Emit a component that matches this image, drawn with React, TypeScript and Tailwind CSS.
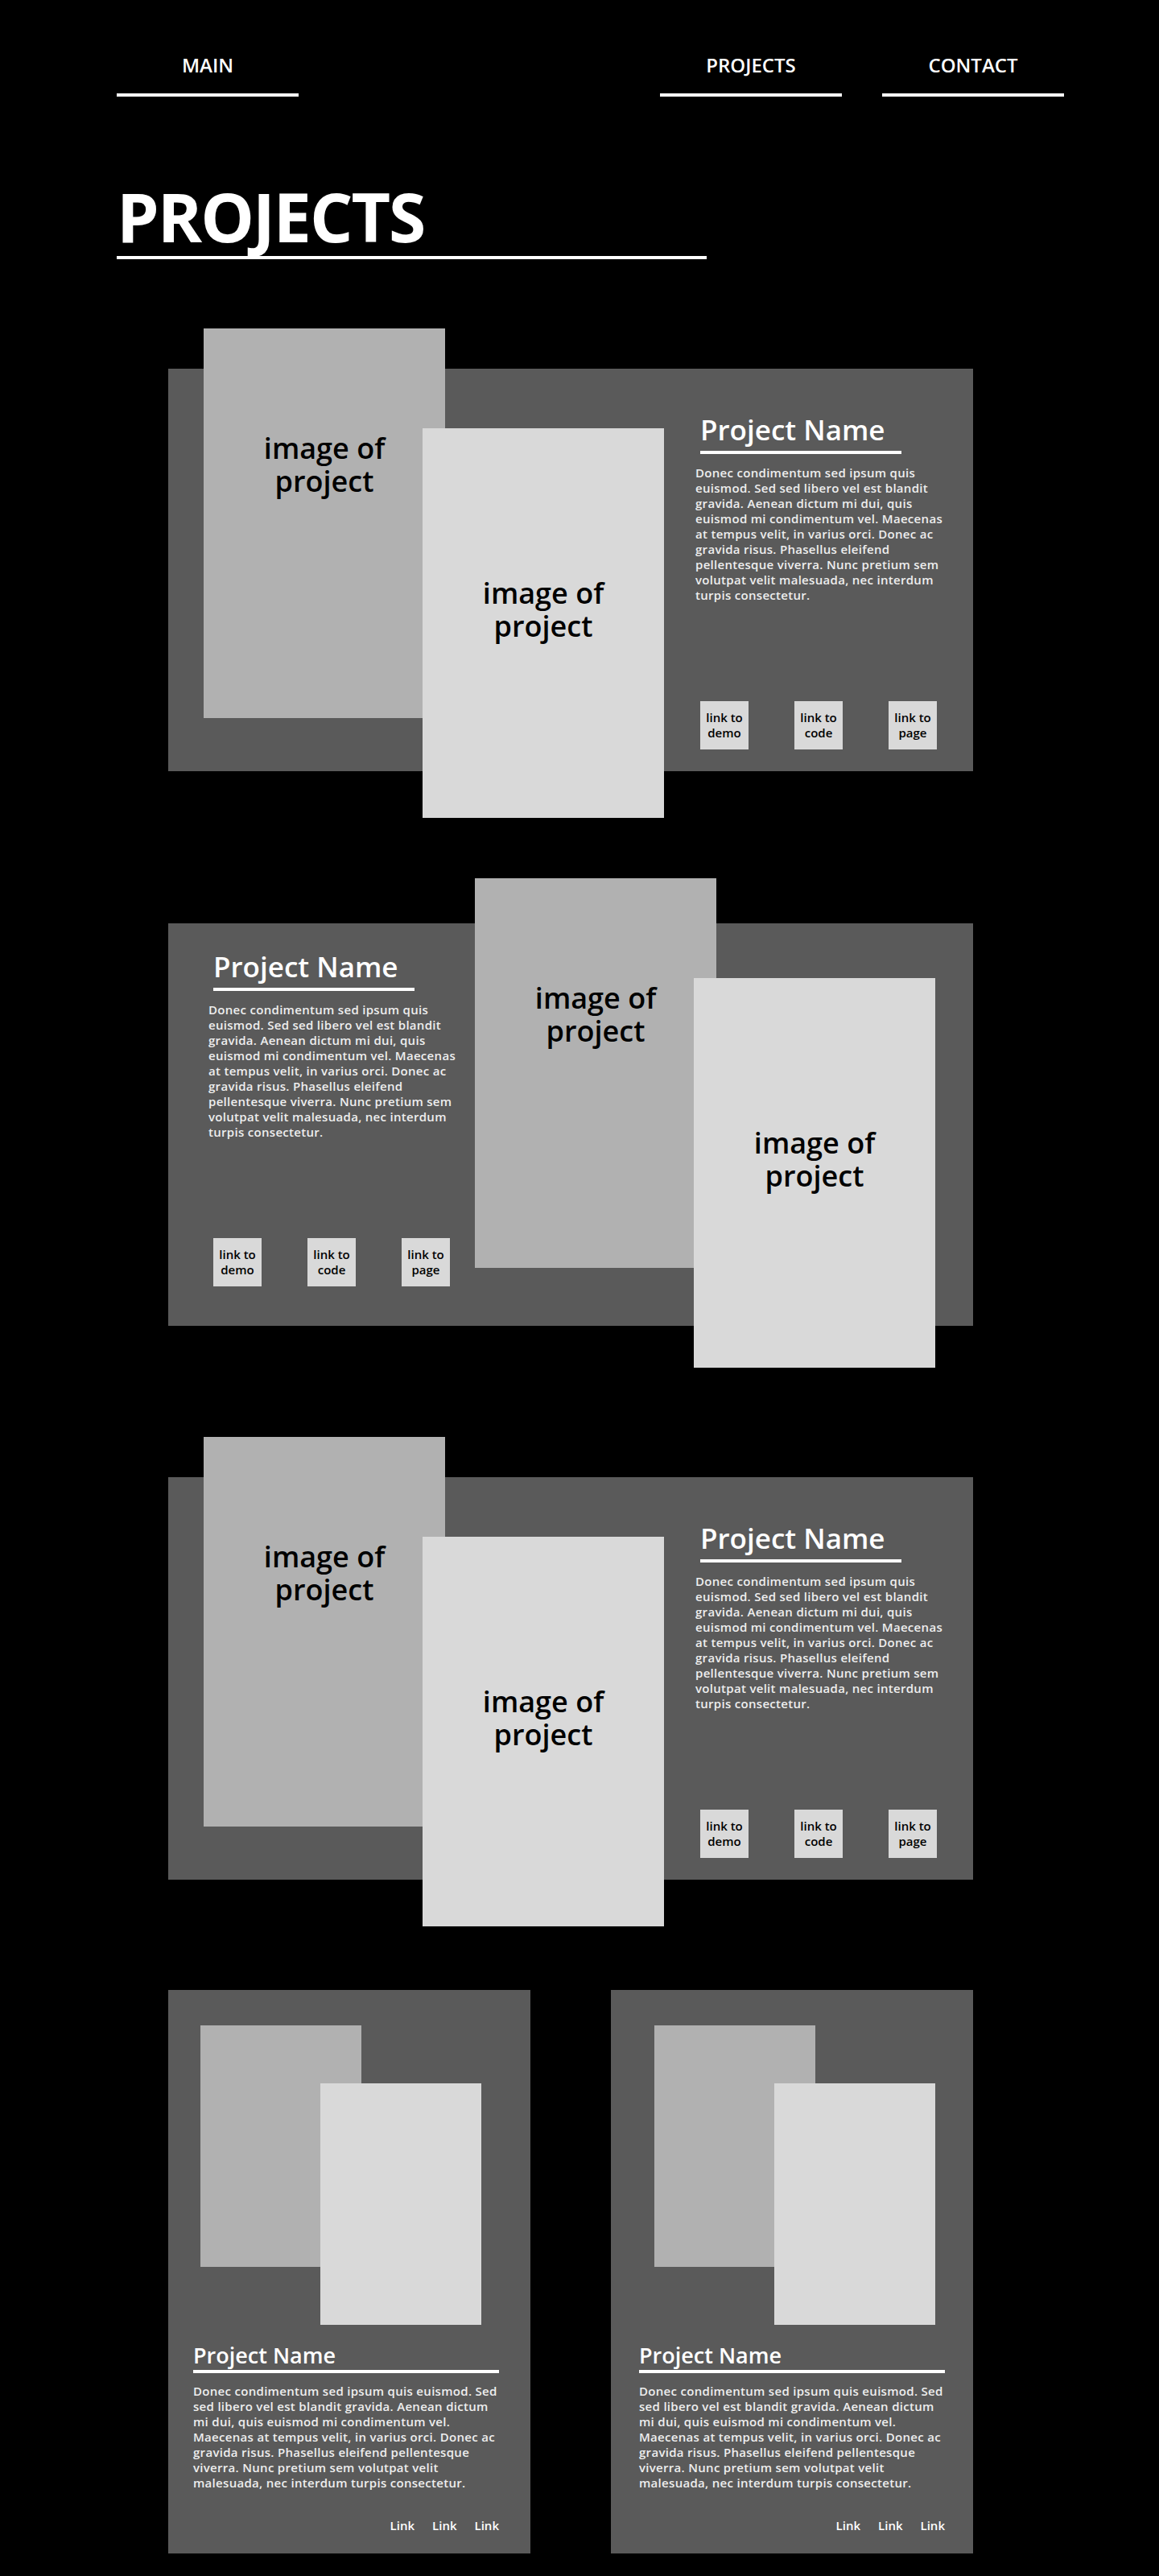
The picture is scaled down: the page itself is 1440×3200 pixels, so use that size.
const LOREM =
  "Donec condimentum sed ipsum quis euismod. Sed sed libero vel est blandit gravida. Aenean dictum mi dui, quis euismod mi condimentum vel. Maecenas at tempus velit, in varius orci. Donec ac gravida risus. Phasellus eleifend pellentesque viverra. Nunc pretium sem volutpat velit malesuada, nec interdum turpis consectetur.";

const NAV = [
  { label: "PROJECTS", href: "#projects" },
  { label: "CONTACT", href: "#contact" },
];

function NavItem({ label, href }: { label: string; href: string }) {
  return (
    <a href={href} className="flex w-[226px] flex-col items-center">
      <span className="text-[24px] font-semibold leading-[32px] text-white">{label}</span>
      <span className="mt-[19px] h-[4px] w-full bg-white" />
    </a>
  );
}

function ProjectText({ className }: { className: string }) {
  return (
    <div className={`flex w-[316px] shrink-0 flex-col ${className}`}>
      <h2 className="ml-[6px] text-[35px] font-semibold leading-none text-white">Project Name</h2>
      <div className="ml-[6px] mt-[9px] h-[4px] w-[250px] bg-white" />
      <p className="mt-[14px] w-[312px] text-[15px] font-semibold leading-[19px] tracking-[0.3px] text-[#eeeeee]">
        {LOREM}
      </p>
      <div className="ml-[6px] mt-[122px] flex gap-[57px]">
        {["demo", "code", "page"].map((t) => (
          <a
            key={t}
            href="#"
            className="flex h-[60px] w-[60px] items-center justify-center bg-[#d9d9d9] text-center text-[15px] font-semibold leading-[19px] text-black"
          >
            link to
            <br />
            {t}
          </a>
        ))}
      </div>
    </div>
  );
}

function ImagePair({ className, upA, downB }: { className: string; upA: string; downB: string }) {
  return (
    <div className={`flex shrink-0 items-start ${className}`}>
      <div
        className={`relative h-[484px] w-[300px] shrink-0 bg-[#b1b1b1] pt-[128px] text-center text-[36px] font-semibold leading-[41px] text-black ${upA}`}
      >
        image of
        <br />
        project
      </div>
      <div
        className={`relative -ml-[28px] h-[484px] w-[300px] shrink-0 bg-[#d9d9d9] pt-[184px] text-center text-[36px] font-semibold leading-[41px] text-black ${downB}`}
      >
        image of
        <br />
        project
      </div>
    </div>
  );
}

function Card({ imgOffset, textOffset }: { imgOffset: string; textOffset: string }) {
  return (
    <div className="flex w-[450px] flex-col bg-[#5a5a5a] pb-[25px]">
      <div className={`mt-[44px] flex items-start ${imgOffset}`}>
        <div className="relative h-[300px] w-[200px] shrink-0 bg-[#b1b1b1]" />
        <div className="relative -ml-[51px] mt-[72px] h-[300px] w-[200px] shrink-0 bg-[#d9d9d9]" />
      </div>
      <div className={`mt-[24px] flex w-[380px] flex-col ${textOffset}`}>
        <h3 className="text-[27px] font-semibold leading-none text-white">Project Name</h3>
        <div className="mt-[5px] h-[4px] w-[380px] bg-white" />
        <p className="mt-[13px] text-[15px] font-semibold leading-[19px] tracking-[0.3px] text-[#eeeeee]">{LOREM}</p>
        <div className="mt-[34px] flex justify-end gap-[22px] text-[15px] font-semibold leading-[19px] text-white">
          <a href="#">Link</a>
          <a href="#">Link</a>
          <a href="#">Link</a>
        </div>
      </div>
    </div>
  );
}

export default function App() {
  return (
    <div className="min-h-screen bg-black pb-[29px] [font-family:'Open_Sans',sans-serif]">
      {/* top nav */}
      <nav className="flex justify-between pl-[145px] pr-[118px] pt-[65px]">
        <NavItem label="MAIN" href="#main" />
        <div className="flex gap-[50px]">
          {NAV.map((n) => (
            <NavItem key={n.label} {...n} />
          ))}
        </div>
      </nav>

      <header className="pl-[145px]">
        <h1 className="mt-[107px] text-[84px] font-bold leading-none tracking-[-2px] text-white">PROJECTS</h1>
        <div className="mt-[7px] h-[4px] w-[733px] bg-white" />
      </header>

      <section className="ml-[209px] mt-[136px] flex h-[500px] w-[1000px] items-start bg-[#5a5a5a]">
        <ImagePair className="ml-[44px]" upA="-mt-[50px]" downB="mt-[74px]" />
        <ProjectText className="ml-[39px] pt-[58px]" />
      </section>

      <section className="ml-[209px] mt-[189px] flex h-[500px] w-[1000px] items-start bg-[#5a5a5a]">
        <ProjectText className="ml-[50px] pt-[36px]" />
        <ImagePair className="ml-[15px]" upA="-mt-[56px]" downB="mt-[68px]" />
      </section>

      <section className="ml-[209px] mt-[188px] flex h-[500px] w-[1000px] items-start bg-[#5a5a5a]">
        <ImagePair className="ml-[44px]" upA="-mt-[50px]" downB="mt-[74px]" />
        <ProjectText className="ml-[39px] pt-[58px]" />
      </section>

      <div className="ml-[209px] mt-[137px] flex gap-[100px]">
        <Card imgOffset="ml-[40px]" textOffset="ml-[31px]" />
        <Card imgOffset="ml-[54px]" textOffset="ml-[35px]" />
      </div>
    </div>
  );
}
